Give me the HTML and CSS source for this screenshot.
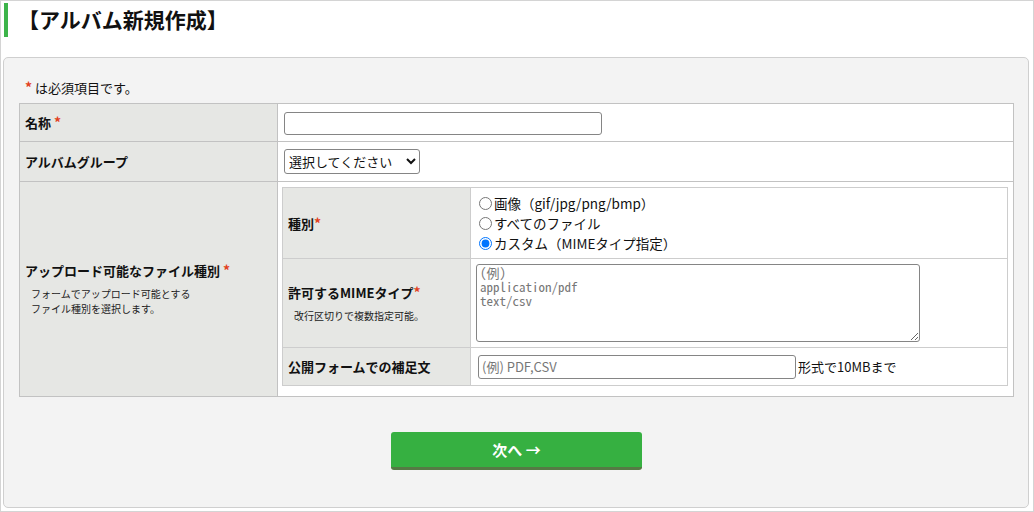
FILE: index.html
```html
<!DOCTYPE html>
<html lang="ja">
<head>
<meta charset="utf-8">
<title>アルバム新規作成</title>
<link rel="stylesheet" href="styles.css">
</head>
<body>
<div class="page">
  <h1 class="title">【アルバム新規作成】</h1>
  <div class="panel">
    <p class="note"><span class="req">*</span> は必須項目です。</p>
    <table class="form">
      <tr class="row-name">
        <th>名称 <span class="req">*</span></th>
        <td><input type="text" class="txt-name"></td>
      </tr>
      <tr class="row-group">
        <th>アルバムグループ</th>
        <td><select class="sel"><option>選択してください</option></select></td>
      </tr>
      <tr class="row-upload">
        <th>
          <div class="lbl">アップロード可能なファイル種別 <span class="req">*</span></div>
          <div class="sub">フォームでアップロード可能とする<br>ファイル種別を選択します。</div>
        </th>
        <td class="nest-cell">
          <table class="inner">
            <tr class="r-kind">
              <th>種別<span class="req">*</span></th>
              <td>
                <label class="radio"><input type="radio" name="k">画像（gif/jpg/png/bmp）</label>
                <label class="radio"><input type="radio" name="k">すべてのファイル</label>
                <label class="radio"><input type="radio" name="k" checked>カスタム（MIMEタイプ指定）</label>
              </td>
            </tr>
            <tr class="r-mime">
              <th>
                <div>許可するMIMEタイプ<span class="req">*</span></div>
                <div class="sub2">改行区切りで複数指定可能。</div>
              </th>
              <td><textarea class="ta" placeholder="(例)&#10;application/pdf&#10;text/csv"></textarea></td>
            </tr>
            <tr class="r-supp">
              <th>公開フォームでの補足文</th>
              <td><input type="text" class="txt-supp" placeholder="(例) PDF,CSV"><span class="suffix">形式で10MBまで</span></td>
            </tr>
          </table>
        </td>
      </tr>
    </table>
    <div class="actions"><button class="next">次へ →</button></div>
  </div>
</div>
</body>
</html>
```
FILE: styles.css
```css
html, body {
  margin: 0;
  padding: 0;
}
body {
  font-family: "Noto Sans CJK JP", "Noto Sans", sans-serif;
  font-size: 13px;
  color: #111;
  background: #fff;
}
.page {
  width: 1034px;
  height: 512px;
  box-sizing: border-box;
  border: 1px solid #d4d4d4;
  display: flex;
  flex-direction: column;
}
.title {
  margin: 2px 0 0 3px;
  height: 34px;
  line-height: 32px;
  border-left: 4px solid #3db44a;
  padding-left: 10px;
  font-size: 21px;
  font-weight: bold;
  color: #111;
}
.panel {
  margin: 20px 4px 3px 2px;
  flex: 1;
  background: #f3f3f3;
  border: 1px solid #cfcfcf;
  border-radius: 5px;
  padding: 20px 14px 0 15px;
}
.note {
  margin: 0 0 5px 6px;
  line-height: 20px;
  font-size: 13px;
}
.req {
  color: #e2401c;
  font-weight: bold;
  font-size: 14px;
  line-height: 0;
}
.form {
  width: 995px;
  border-collapse: collapse;
  background: #fff;
}
.form > tbody > tr > th,
.form > tbody > tr > td {
  border: 1px solid #c2c2c2;
  padding: 0;
  vertical-align: middle;
}
.form > tbody > tr > th {
  width: 252px;
  background: #e6e7e4;
  text-align: left;
  padding-left: 5px;
  font-weight: bold;
}
.form > tbody > tr > td {
  padding-left: 6px;
}
.row-name > th, .row-name > td { height: 37px; }
.row-group > th, .row-group > td { height: 39px; }
.txt-name {
  width: 318px;
  height: 23px;
  box-sizing: border-box;
  display: block;
  margin-top: 1px;
  border: 1px solid #858585;
  border-radius: 3px;
  background: #fff;
}
.sel {
  width: 136px;
  height: 25px;
  font-size: 13px;
  font-family: inherit;
  display: block;
  border: 1px solid #858585;
  border-radius: 3px;
  background: #fff;
  color: #111;
}
.sub {
  font-size: 10px;
  font-weight: normal;
  padding-left: 6px;
  line-height: 15px;
  margin-top: 6px;
  color: #222;
}
.lbl {
  line-height: 18px;
}
.form > tbody > tr > td.nest-cell {
  padding: 5px 5px 10px 4px;
}
.inner {
  width: 100%;
  border-collapse: collapse;
}
.inner th, .inner td {
  border: 1px solid #cdcdcd;
  padding: 0;
  vertical-align: middle;
}
.inner th {
  width: 182px;
  background: #e6e7e4;
  text-align: left;
  padding-left: 5px;
  font-weight: bold;
}
.inner td {
  padding-left: 7px;
}
.r-kind th, .r-kind td { height: 70px; }
.r-mime th, .r-mime td { height: 88px; }
.r-supp th, .r-supp td { height: 37px; }
.radio {
  display: flex;
  align-items: center;
  height: 20px;
  font-size: 13.5px;
}
.radio input {
  margin: 0 2px 0 1px;
  width: 13px;
  height: 13px;
}
.sub2 {
  font-size: 10px;
  font-weight: normal;
  padding-left: 6px;
  margin-top: 6px;
  color: #222;
}
.ta {
  display: block;
  width: 444px;
  height: 78px;
  box-sizing: border-box;
  margin-left: -2px;
  font-family: "Noto Sans Mono CJK JP", "Liberation Mono", monospace;
  font-size: 13px;
  line-height: 14px;
  padding: 1px 3px;
  resize: both;
  border: 1px solid #858585;
  border-radius: 3px;
  background: #fff;
}
.ta::placeholder { color: #777; }
.txt-supp {
  width: 318px;
  height: 24px;
  box-sizing: border-box;
  font-family: inherit;
  font-size: 13px;
  padding: 0 3px;
  vertical-align: middle;
  border: 1px solid #858585;
  border-radius: 3px;
  background: #fff;
}
.txt-supp::placeholder { color: #777; }
.suffix {
  vertical-align: middle;
  margin-left: 2px;
}
.actions {
  display: flex;
  justify-content: center;
  margin-top: 35px;
}
.next {
  width: 251px;
  height: 38px;
  background: #36b041;
  color: #fff;
  border: none;
  border-bottom: 3px solid #557a44;
  border-radius: 3px;
  font-family: inherit;
  font-size: 15px;
  font-weight: bold;
  padding: 0;
}
```
